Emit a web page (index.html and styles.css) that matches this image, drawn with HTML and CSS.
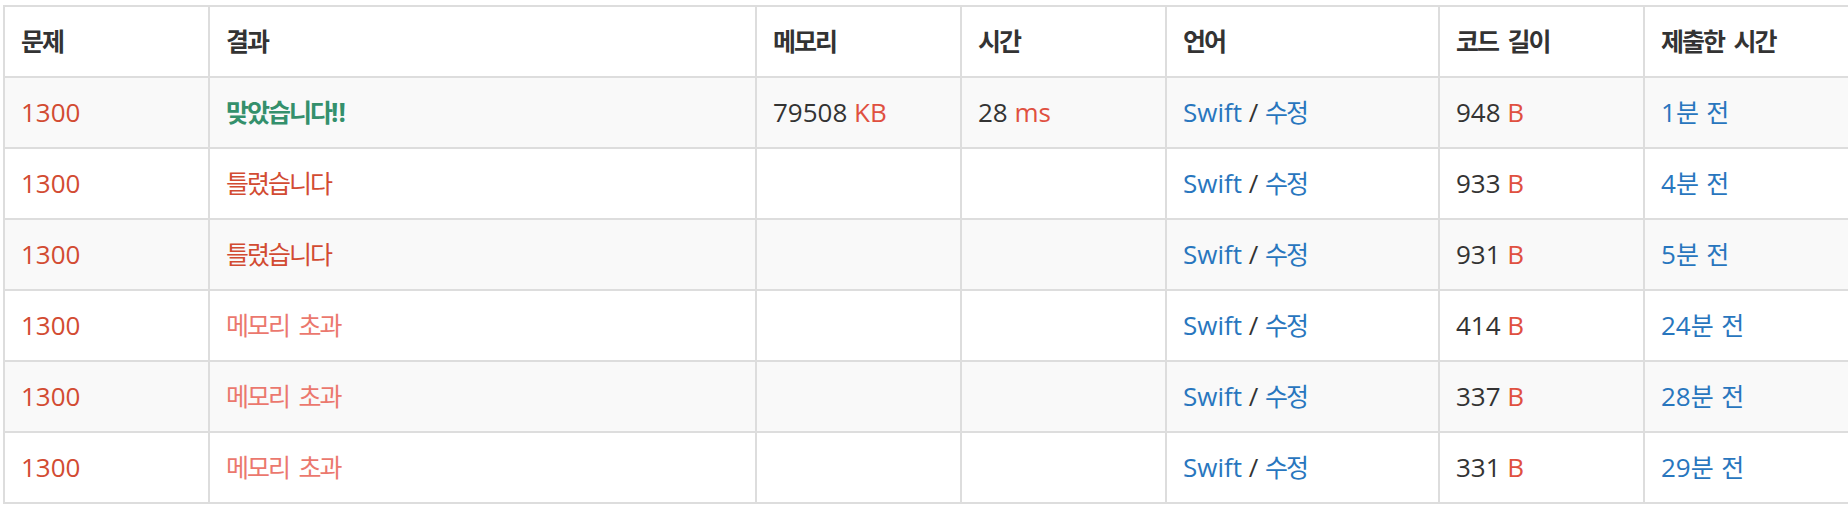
FILE: index.html
```html
<!DOCTYPE html>
<html lang="ko">
<head>
<meta charset="utf-8">
<title>채점 현황</title>
<link rel="stylesheet" href="styles.css">
</head>
<body>
<table class="status-table">
  <colgroup>
    <col class="c-prob">
    <col class="c-result">
    <col class="c-mem">
    <col class="c-time">
    <col class="c-lang">
    <col class="c-len">
    <col class="c-date">
  </colgroup>
  <thead>
    <tr>
      <th><span class="ko">문제</span></th>
      <th><span class="ko">결과</span></th>
      <th><span class="ko">메모리</span></th>
      <th><span class="ko">시간</span></th>
      <th><span class="ko">언어</span></th>
      <th><span class="ko">코드 길이</span></th>
      <th><span class="ko">제출한 시간</span></th>
    </tr>
  </thead>
  <tbody>
    <tr>
      <td><a class="prob">1300</a></td>
      <td><span class="result-ac"><span class="ko">맞았습니다</span>!!</span></td>
      <td>79508 <span class="unit">KB</span></td>
      <td>28 <span class="unit">ms</span></td>
      <td><a class="link">Swift</a> / <a class="link ko">수정</a></td>
      <td>948 <span class="unit">B</span></td>
      <td><a class="link">1<span class="ko">분 전</span></a></td>
    </tr>
    <tr>
      <td><a class="prob">1300</a></td>
      <td><span class="result-wa ko">틀렸습니다</span></td>
      <td></td>
      <td></td>
      <td><a class="link">Swift</a> / <a class="link ko">수정</a></td>
      <td>933 <span class="unit">B</span></td>
      <td><a class="link">4<span class="ko">분 전</span></a></td>
    </tr>
    <tr>
      <td><a class="prob">1300</a></td>
      <td><span class="result-wa ko">틀렸습니다</span></td>
      <td></td>
      <td></td>
      <td><a class="link">Swift</a> / <a class="link ko">수정</a></td>
      <td>931 <span class="unit">B</span></td>
      <td><a class="link">5<span class="ko">분 전</span></a></td>
    </tr>
    <tr>
      <td><a class="prob">1300</a></td>
      <td><span class="result-mle ko">메모리 초과</span></td>
      <td></td>
      <td></td>
      <td><a class="link">Swift</a> / <a class="link ko">수정</a></td>
      <td>414 <span class="unit">B</span></td>
      <td><a class="link">24<span class="ko">분 전</span></a></td>
    </tr>
    <tr>
      <td><a class="prob">1300</a></td>
      <td><span class="result-mle ko">메모리 초과</span></td>
      <td></td>
      <td></td>
      <td><a class="link">Swift</a> / <a class="link ko">수정</a></td>
      <td>337 <span class="unit">B</span></td>
      <td><a class="link">28<span class="ko">분 전</span></a></td>
    </tr>
    <tr>
      <td><a class="prob">1300</a></td>
      <td><span class="result-mle ko">메모리 초과</span></td>
      <td></td>
      <td></td>
      <td><a class="link">Swift</a> / <a class="link ko">수정</a></td>
      <td>331 <span class="unit">B</span></td>
      <td><a class="link">29<span class="ko">분 전</span></a></td>
    </tr>
  </tbody>
</table>
</body>
</html>
```

FILE: styles.css
```css
html, body {
  margin: 0;
  padding: 0;
  overflow: hidden;
  background: #fff;
}

body {
  padding: 5px 0 0 3px;
  font-family: "Open Sans", "Noto Sans CJK KR", sans-serif;
  font-size: 26px;
  line-height: 37px;
  color: #333;
}

.status-table {
  border-collapse: separate;
  border-spacing: 0;
  table-layout: fixed;
  width: 1847px;
  border-right: 2px solid #ddd;
  border-bottom: 2px solid #ddd;
}

.c-prob { width: 205px; }
.c-result { width: 547px; }
.c-mem { width: 205px; }
.c-time { width: 205px; }
.c-lang { width: 273px; }
.c-len { width: 205px; }
.c-date { width: auto; }

.status-table th,
.status-table td {
  box-sizing: border-box;
  padding: 16px 16px;
  border-left: 2px solid #ddd;
  border-top: 2px solid #ddd;
  text-align: left;
  vertical-align: top;
  white-space: nowrap;
  overflow: hidden;
  height: 71px;
}

.status-table th {
  font-weight: 700;
  color: #333;
}

.status-table tbody tr:nth-child(odd) td {
  background: #f9f9f9;
}

.ko {
  font-size: 25px;
  letter-spacing: -2px;
  word-spacing: 5px;
}

.prob {
  color: #d24b32;
}

.link {
  color: #2876be;
  text-decoration: none;
}

.unit {
  color: #e05040;
}

.result-ac {
  color: #34906c;
  font-weight: 700;
}

.result-wa {
  color: #d24b32;
}

.result-mle {
  color: #eb786e;
}
```
